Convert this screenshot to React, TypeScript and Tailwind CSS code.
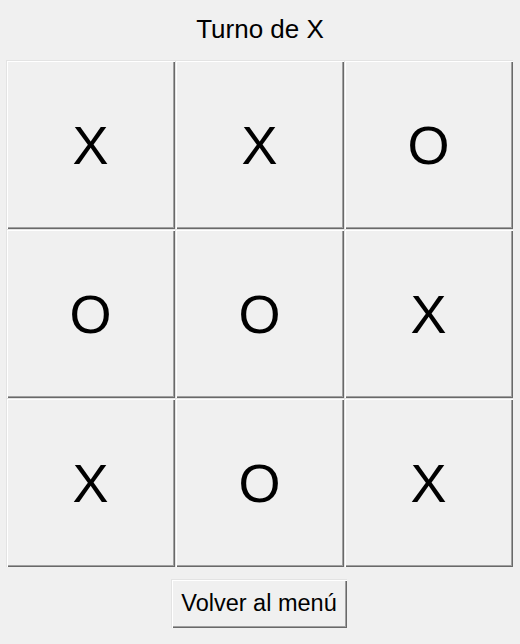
const board = ['X', 'X', 'O', 'O', 'O', 'X', 'X', 'O', 'X'];

const raised =
  'shadow-[inset_1px_1px_0_#e3e3e3,inset_2px_2px_0_#ffffff,inset_-1px_-1px_0_#696969,inset_-2px_-2px_0_#a0a0a0]';

export default function App() {
  return (
    <div
      className="w-[520px] h-[644px] bg-[#f0f0f0] flex flex-col items-center text-black"
      style={{ fontFamily: '"Liberation Sans", Arial, sans-serif' }}
    >
      <div className="mt-[14px] text-[26px] leading-[30px]">Turno de X</div>

      <div className="mt-[16px] self-start ml-[6px] grid grid-cols-[repeat(3,169px)] grid-rows-[repeat(3,169px)]">
        {board.map((mark, i) => (
          <button
            key={i}
            className={`flex items-center justify-center bg-[#f0f0f0] text-[54px] leading-none ${raised}`}
          >
            {mark}
          </button>
        ))}
      </div>

      <button
        className={`mt-[12px] self-start ml-[171px] w-[176px] h-[49px] flex items-center justify-center bg-[#f0f0f0] text-[23.5px] leading-none ${raised}`}
      >
        Volver al menú
      </button>
    </div>
  );
}
